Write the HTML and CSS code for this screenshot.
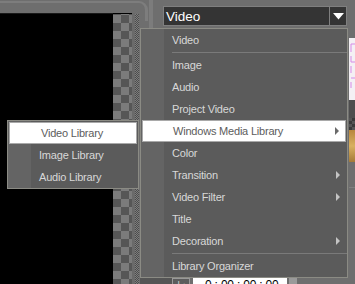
FILE: index.html
```html
<!DOCTYPE html>
<html>
<head>
<meta charset="utf-8">
<link rel="stylesheet" href="styles.css">
</head>
<body>
<div class="app">
  <div class="left">
    <div class="topbar"><div class="frame"></div></div>
    <div class="stage">
      <div class="black"></div>
      <div class="checker"></div>
      <div class="gap"></div>
      <div class="dots"></div>
    </div>
  </div>
  <div class="right">
    <div class="toolbar">
      <div class="divider"></div>
      <div class="combo">
        <span class="combo-text">Video</span>
        <span class="combo-btn"><svg width="11" height="7" viewBox="0 0 11 7"><path d="M0 0H11L5.5 6.5Z" fill="#fff"/></svg></span>
      </div>
    </div>
    <div class="body">
      <div class="lib"></div>
      <div class="thumbs">
        <div class="t t1"><svg width="6" height="62" viewBox="0 0 6 62"><path d="M2 6v8M2 6h4M2 18v6h4M2 28v7M2 40h4M2 44v6" stroke="#d68ae8" stroke-width="1" fill="none"/></svg></div>
        <div class="t t2"></div>
        <div class="t t3"></div>
        <div class="t t4"></div>
        <div class="t t5"></div>
      </div>
    </div>
    <div class="bottom">
      <div class="bgap"></div>
      <div class="bbtn">|◂</div>
      <div class="tc">0 : 00 : 00 : 00</div>
      <div class="up"></div>
    </div>
  </div>

  <div class="menu">
    <div class="item">Video</div>
    <div class="sep"></div>
    <div class="item">Image</div>
    <div class="item">Audio</div>
    <div class="item">Project Video</div>
    <div class="item hl">Windows Media Library<span class="arrow"></span></div>
    <div class="item">Color</div>
    <div class="item">Transition<span class="arrow"></span></div>
    <div class="item">Video Filter<span class="arrow"></span></div>
    <div class="item">Title</div>
    <div class="item">Decoration<span class="arrow"></span></div>
    <div class="sep"></div>
    <div class="item">Library Organizer</div>
  </div>

  <div class="menu sub">
    <div class="item hl">Video Library</div>
    <div class="item">Image Library</div>
    <div class="item">Audio Library</div>
  </div>
</div>
</body>
</html>
```
FILE: styles.css
```css
* { box-sizing: border-box; }
html, body { margin: 0; padding: 0; background: #6e6e6e; }
.app {
  position: relative;
  width: 355px;
  height: 284px;
  overflow: hidden;
  display: flex;
  background: #6e6e6e;
  font-family: "Liberation Sans", Arial, sans-serif;
  font-size: 11px;
  letter-spacing: -0.2px;
}
.left { width: 140px; display: flex; flex-direction: column; }
.topbar { height: 13px; position: relative; }
.frame {
  width: 148px;
  height: 20px;
  margin-top: 1px;
  border-top: 2px solid #7d7d7d;
  border-right: 3px solid #7d7d7d;
  border-top-right-radius: 9px;
}
.stage { flex: 1; display: flex; }
.black { width: 113px; background: #000; border-top: 1px solid #1a1a1a; }
.checker {
  width: 19px;
  background: repeating-conic-gradient(#565656 0 25%, #7b7b7b 0 50%) 0 1px / 16px 16px;
  border-top: 1px solid #000;
}
.gap { width: 3px; background: #6a6a6a; }
.dots {
  width: 4px;
  margin-top: 1px;
  background: repeating-conic-gradient(#4c4c4c 0 25%, #7e7e7e 0 50%) 0 0 / 2px 2px;
}
.right { flex: 1; display: flex; flex-direction: column; }
.toolbar { height: 28px; display: flex; align-items: flex-start; }
.divider { width: 4px; height: 28px; margin-left: 9px; background: #7c7c7c; }
.combo {
  margin-left: 10px;
  margin-top: 6px;
  width: 184px;
  height: 20px;
  background: #343434;
  border: 1px solid #7f7f7f;
  display: flex;
}
.combo-text {
  flex: 1;
  color: #fff;
  font-size: 13.5px;
  letter-spacing: 0;
  line-height: 19px;
  padding-left: 2px;
}
.combo-btn {
  width: 17px;
  border-left: 1px solid #7f7f7f;
  display: flex;
  align-items: center;
  justify-content: center;
}
.body { flex: 1; display: flex; }
.lib { flex: 1; }
.thumbs { width: 6px; display: flex; flex-direction: column; padding-top: 10px; }
.t1 { height: 62px; background: #f4f0f4; overflow: hidden; }
.t1 svg { display: block; }
.t2 { height: 18px; background: #4e4e4e; }
.t3 { height: 12px; background: repeating-conic-gradient(#3a3a3a 0 25%, #555 0 50%) 0 0 / 6px 6px; }
.t4 { height: 32px; background: linear-gradient(#b8863c, #d8b060 50%, #a47a38); }
.t5 { height: 26px; border-bottom: 1px solid #7f7f7f; }
.bottom { height: 14px; display: flex; align-items: flex-start; margin-bottom: -8px; }
.bgap { width: 32px; height: 14px; background: #555; }
.bbtn { width: 18px; height: 14px; background: #5c5c5c; border: 1px solid #999; color: #ddd; font-size: 9px; line-height: 12px; text-align: center; }
.tc { width: 94px; margin-left: 3px; height: 14px; background: #fff; color: #000; font-size: 12px; line-height: 14px; padding-left: 12px; }
.up { width: 8px; height: 8px; margin-left: 2px; background: #9a9a9a; }

.menu {
  position: absolute;
  left: 140px;
  top: 28px;
  width: 208px;
  height: 250px;
  border: 1px solid #8b8b84;
  background: linear-gradient(90deg, #646464 0 23px, #5b5b5b 23px);
}
.item {
  position: relative;
  height: 22px;
  line-height: 22px;
  padding-left: 31px;
  color: #d8d8d8;
  white-space: nowrap;
}
.item.hl {
  margin: 0 1px;
  padding-left: 30px;
  background: #fff;
  border: 1px solid #a9a9a9;
  line-height: 20px;
  color: #5c5c5c;
}
.sep { margin-left: 31px; border-top: 1px solid #7a7a7a; margin-top: 1px; height: 2px; }
.arrow {
  position: absolute;
  right: 7px;
  top: 7px;
  width: 0;
  height: 0;
  border-left: 4px solid #c4c4c4;
  border-top: 4px solid transparent;
  border-bottom: 4px solid transparent;
}
.hl .arrow { border-left-color: #6a6a6a; top: 6px; right: 6px; }
.menu.sub {
  left: 7px;
  top: 120px;
  width: 132px;
  height: 69px;
  padding-top: 1px;
}
.sub .item.hl { padding-left: 31px; }
```
